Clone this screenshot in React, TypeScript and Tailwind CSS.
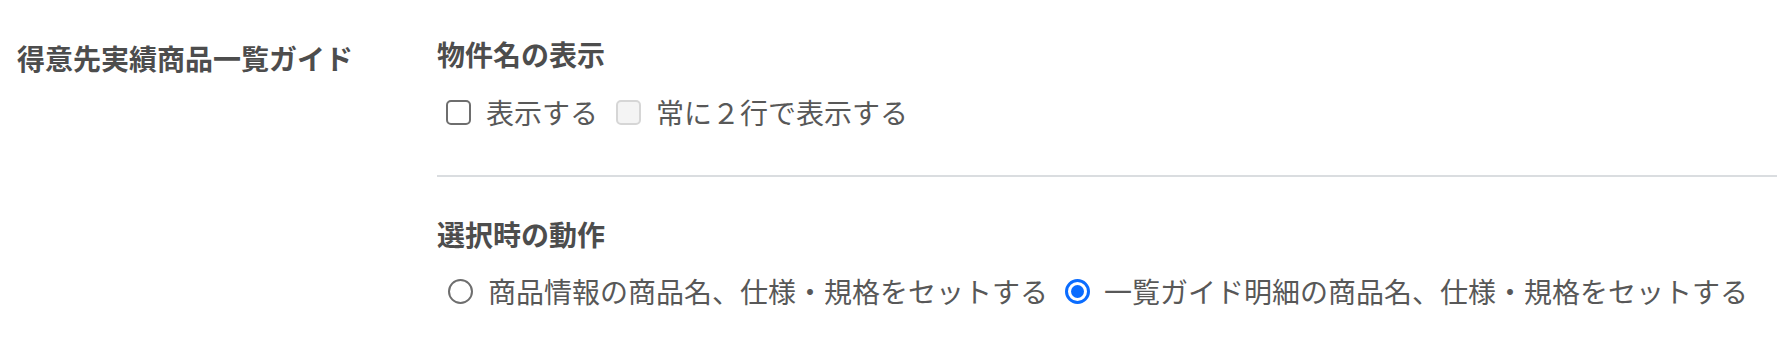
const font = { fontFamily: '"Noto Sans CJK JP", "Noto Sans", sans-serif' };

function Checkbox({ disabled = false }: { disabled?: boolean }) {
  return (
    <span
      className={`inline-block h-[25px] w-[25px] shrink-0 rounded-[5px] border-2 ${
        disabled ? 'border-[#d6d6d6] bg-[#f4f4f4]' : 'border-[#6e6e6e] bg-white'
      }`}
    />
  );
}

function Radio({ checked = false }: { checked?: boolean }) {
  if (checked) {
    return (
      <span className="flex h-[25px] w-[25px] shrink-0 items-center justify-center rounded-full border-[3px] border-[#0a6cff] bg-white">
        <span className="h-[13px] w-[13px] rounded-full bg-[#0a6cff]" />
      </span>
    );
  }
  return <span className="inline-block h-[25px] w-[25px] shrink-0 rounded-full border-2 border-[#6e6e6e] bg-white" />;
}

export default function App() {
  return (
    <div className="flex h-[341px] w-full bg-white text-[#585858]" style={font}>
      <div className="w-[437px] shrink-0 pl-[17px] pt-[38px]">
        <div className="text-[28px] font-bold leading-[40px] text-[#4d4d4d]">得意先実績商品一覧ガイド</div>
      </div>

      <div className="flex-1 pt-[34px]">
        <div className="text-[28px] font-bold leading-[40px] text-[#4d4d4d]">物件名の表示</div>
        <div className="mt-[18px] flex h-[40px] items-center text-[28px]">
          <label className="ml-[9px] flex items-center gap-[15px]">
            <Checkbox />
            <span>表示する</span>
          </label>
          <label className="ml-[18px] flex items-center gap-[15px]">
            <Checkbox disabled />
            <span>常に２行で表示する</span>
          </label>
        </div>

        <div className="mt-[43px] h-[2px] w-full bg-[#dadde0]" />

        <div className="mt-[37px] text-[28px] font-bold leading-[40px] text-[#4d4d4d]">選択時の動作</div>
        <div className="mt-[17px] flex h-[40px] items-center text-[28px]">
          <label className="ml-[11px] flex items-center gap-[15px]">
            <Radio />
            <span>商品情報の商品名、仕様・規格をセットする</span>
          </label>
          <label className="ml-[17px] flex items-center gap-[14px]">
            <Radio checked />
            <span>一覧ガイド明細の商品名、仕様・規格をセットする</span>
          </label>
        </div>
      </div>
    </div>
  );
}
